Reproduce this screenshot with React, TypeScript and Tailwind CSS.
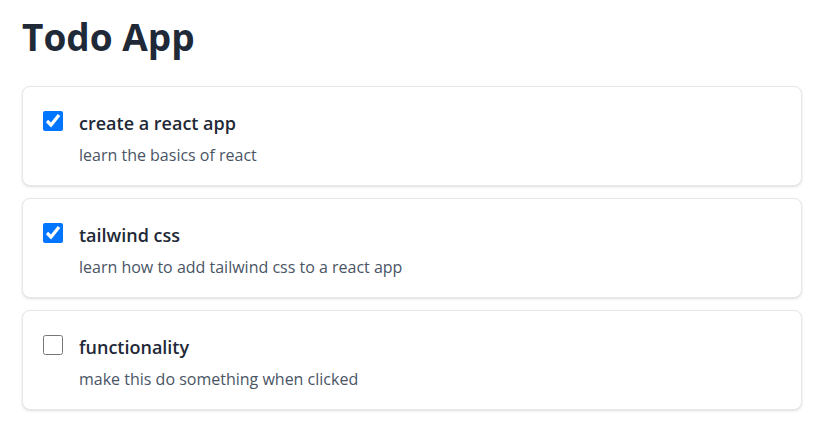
import React, { useState } from 'react';

interface Todo {
  id: number;
  title: string;
  description: string;
  done: boolean;
}

const initialTodos: Todo[] = [
  { id: 1, title: 'create a react app', description: 'learn the basics of react', done: true },
  { id: 2, title: 'tailwind css', description: 'learn how to add tailwind css to a react app', done: true },
  { id: 3, title: 'functionality', description: 'make this do something when clicked', done: false },
];

export default function App() {
  const [todos, setTodos] = useState<Todo[]>(initialTodos);

  const toggle = (id: number) => {
    setTodos(todos.map((t) => (t.id === id ? { ...t, done: !t.done } : t)));
  };

  return (
    <div className="min-h-screen bg-white pl-[22px] pt-[10px] font-['Open_Sans',sans-serif] text-gray-800">
      <h1 className="text-[37px] font-bold leading-[54px] text-[#1f2937]">Todo App</h1>
      <div className="mt-[22px] flex w-[780px] flex-col gap-3">
        {todos.map((todo) => (
          <div
            key={todo.id}
            className="flex items-start gap-4 rounded-lg border border-gray-200 bg-white px-5 pb-[18px] pt-[22px] shadow-sm"
          >
            <input
              type="checkbox"
              checked={todo.done}
              onChange={() => toggle(todo.id)}
              className="mt-0.5 h-5 w-5 shrink-0 accent-[#0075ff]"
            />
            <div className="flex flex-col">
              <span className="text-lg font-semibold leading-7 text-[#1f2937]">{todo.title}</span>
              <span className="mt-[6px] text-base leading-6 text-gray-600">{todo.description}</span>
            </div>
          </div>
        ))}
      </div>
    </div>
  );
}
